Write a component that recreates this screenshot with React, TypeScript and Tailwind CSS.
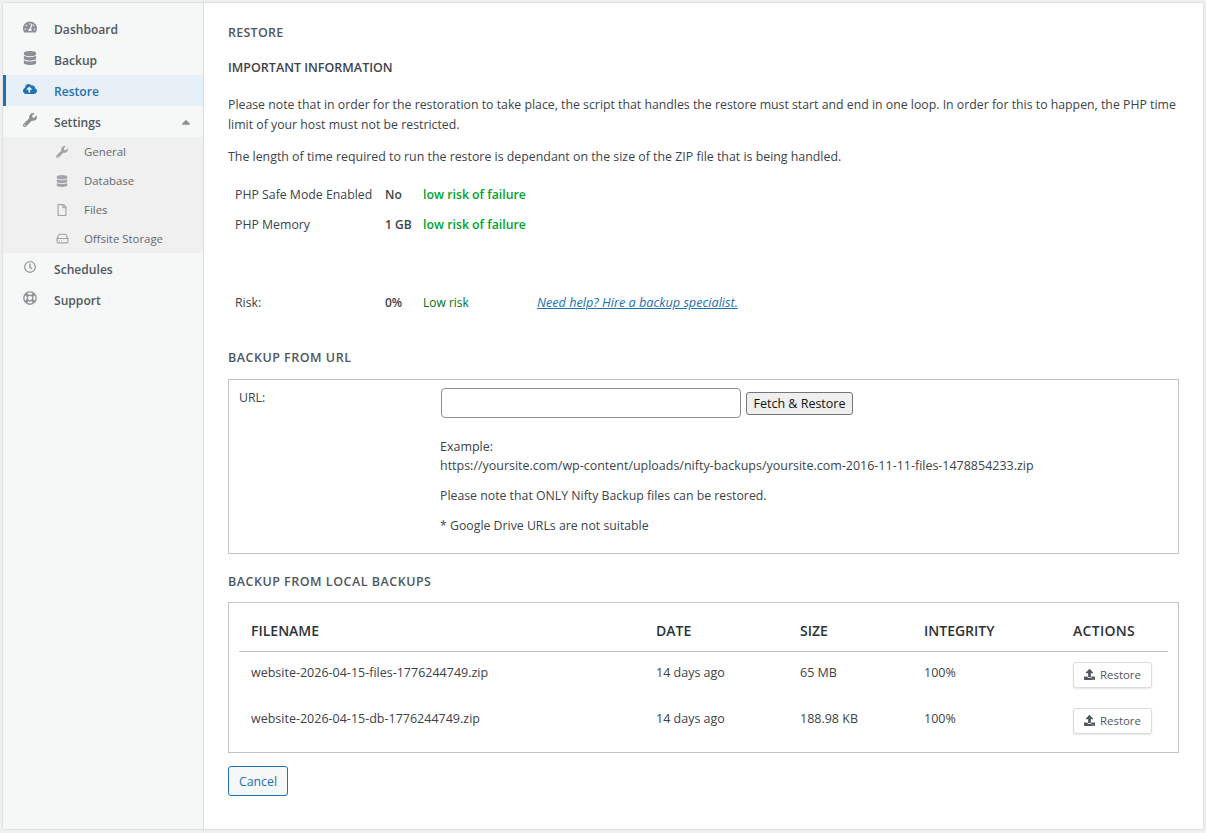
import React from 'react';
import {
  FaTachometerAlt,
  FaDatabase,
  FaCloudUploadAlt,
  FaWrench,
  FaRegFile,
  FaRegClock,
  FaRegLifeRing,
  FaUpload,
  FaCaretUp,
} from 'react-icons/fa';
import { HardDrive } from 'lucide-react';

const NavItem = ({ icon, label, active, caret }: { icon: React.ReactNode; label: string; active?: boolean; caret?: boolean }) => (
  <div
    className={`h-[31px] flex items-center text-[12.1px] font-semibold border-l-[3px] ${
      active ? 'bg-[#e8f0f7] border-[#2271b1] text-[#2271b1]' : 'border-transparent text-[#50575e]'
    }`}
  >
    <span className={`w-[48px] pl-[17px] pb-[3px] text-[14px] ${active ? 'text-[#2271b1]' : 'text-[#8c8f94]'}`}>{icon}</span>
    <span className="flex-1 pt-[4px]">{label}</span>
    {caret && <FaCaretUp className="mr-[10px] text-[14px] text-[#8c8f94]" />}
  </div>
);

const SubItem = ({ icon, label }: { icon: React.ReactNode; label: string }) => (
  <div className="h-[29px] flex items-center text-[11.4px] text-[#646970]">
    <span className="w-[81px] pl-[53px] text-[12px] text-[#a0a3a8]">{icon}</span>
    <span>{label}</span>
  </div>
);

const CheckRow = ({ label, value, risk }: { label: string; value: string; risk: string }) => (
  <div className="h-[30px] flex items-center">
    <span className="w-[157px] pl-[7px]">{label}</span>
    <span className="w-[38px] font-semibold text-[12px]">{value}</span>
    <span className="font-semibold text-[#00a32a]">{risk}</span>
  </div>
);

const files = [
  { name: 'website-2026-04-15-files-1776244749.zip', size: '65 MB' },
  { name: 'website-2026-04-15-db-1776244749.zip', size: '188.98 KB' },
];

export default function App() {
  return (
    <div className="min-h-[833px] bg-[#f0f0f1] p-[3px] pb-[4px] text-[12.3px] text-[#3c434a] font-['Open_Sans','Liberation_Sans',sans-serif]">
      <div className="h-[826px] flex bg-white shadow-[0_0_2px_rgba(0,0,0,0.2)]">
        <aside className="w-[201px] shrink-0 bg-[#f6f7f7] border-r border-[#dcdcde] pt-[10px]">
          <NavItem icon={<FaTachometerAlt />} label="Dashboard" />
          <NavItem icon={<FaDatabase />} label="Backup" />
          <NavItem icon={<FaCloudUploadAlt />} label="Restore" active />
          <NavItem icon={<FaWrench />} label="Settings" caret />
          <div className="bg-[#f0f0f1]">
            <SubItem icon={<FaWrench />} label="General" />
            <SubItem icon={<FaDatabase />} label="Database" />
            <SubItem icon={<FaRegFile />} label="Files" />
            <SubItem icon={<HardDrive size={13} />} label="Offsite Storage" />
          </div>
          <NavItem icon={<FaRegClock className="ml-[1px] text-[12px]" />} label="Schedules" />
          <NavItem icon={<FaRegLifeRing />} label="Support" />
        </aside>

        <main className="flex-1 pl-[24px] pr-[24px]">
          <h2 className="mt-[21px] h-[17px] leading-[17px] text-[12.5px] font-semibold text-[#50575e] tracking-[0.02em]">RESTORE</h2>
          <h3 className="mt-[18px] h-[17px] leading-[17px] text-[12.5px] font-semibold">IMPORTANT INFORMATION</h3>
          <p className="mt-[19px] leading-[20px]">
            Please note that in order for the restoration to take place, the script that handles the restore must start and end in one loop. In order for this to happen, the PHP time limit of your host must not be restricted.
          </p>
          <p className="mt-[12px] leading-[20px] text-[12.36px]">The length of time required to run the restore is dependant on the size of the ZIP file that is being handled.</p>

          <div className="mt-[13px]">
            <CheckRow label="PHP Safe Mode Enabled" value="No" risk="low risk of failure" />
            <CheckRow label="PHP Memory" value="1 GB" risk="low risk of failure" />
          </div>
          <div className="mt-[48px] h-[30px] flex items-center">
            <span className="w-[157px] pl-[7px]">Risk:</span>
            <span className="w-[38px] font-semibold text-[12px]">0%</span>
            <span className="w-[114px] text-[12px] text-[#007017]">Low risk</span>
            <a className="italic underline text-[12.7px] text-[#2271b1]">Need help? Hire a backup specialist.</a>
          </div>

          <h3 className="mt-[31px] h-[17px] leading-[17px] text-[12.5px] font-semibold tracking-[0.04em] text-[#50575e]">BACKUP FROM URL</h3>
          <section className="mt-[13px] h-[175px] border border-[#c3c4c7] flex">
            <div className="w-[211px] pl-[10px] pt-[9px]">URL:</div>
            <div className="pt-[8px]">
              <div className="flex items-center gap-[5px] ml-[1px]">
                <input className="w-[300px] h-[30px] bg-white border border-[#8c8f94] rounded-[4px]" />
                <button className="w-[107px] h-[23px] pt-[2px] bg-[#efefef] border border-[#767676] rounded-[3px] text-[12.5px] text-[#111]">Fetch &amp; Restore</button>
              </div>
              <p className="mt-[19px] leading-[19px] text-[12.47px]">
                Example:
                <br />
                https://yoursite.com/wp-content/uploads/nifty-backups/yoursite.com-2016-11-11-files-1478854233.zip
              </p>
              <p className="mt-[11px] leading-[19px]">Please note that ONLY Nifty Backup files can be restored.</p>
              <p className="mt-[11px] leading-[19px]">* Google Drive URLs are not suitable</p>
            </div>
          </section>

          <h3 className="mt-[19px] h-[17px] leading-[17px] text-[12.5px] font-semibold tracking-[0.04em] text-[#50575e]">BACKUP FROM LOCAL BACKUPS</h3>
          <section className="mt-[12px] h-[151px] border border-[#c3c4c7] px-[10px] pt-[10px] text-[12.5px]">
            <div className="h-[39px] flex items-center border-b border-[#c3c4c7] pl-[12px] pb-[4px] text-[14px] font-semibold text-[#2c3338]">
              <span className="w-[405px]">FILENAME</span>
              <span className="w-[144px]">DATE</span>
              <span className="w-[124px]">SIZE</span>
              <span className="w-[149px]">INTEGRITY</span>
              <span className="tracking-[0.02em]">ACTIONS</span>
            </div>
            <div className="-mt-[2px]">
              {files.map((f) => (
                <div key={f.name} className="h-[46px] flex items-center pl-[12px]">
                  <span className="w-[405px]">{f.name}</span>
                  <span className="w-[144px]">14 days ago</span>
                  <span className="w-[124px]">{f.size}</span>
                  <span className="w-[149px]">100%</span>
                  <button className="mt-[3px] w-[79px] h-[26px] flex items-center justify-center gap-[5px] bg-white border border-[#dcdcde] rounded-[3px] shadow-[0_1px_2px_rgba(0,0,0,0.1)] text-[11.4px] text-[#50575e]">
                    <FaUpload className="text-[11px]" /> Restore
                  </button>
                </div>
              ))}
            </div>
          </section>

          <button className="mt-[13px] w-[60px] h-[30px] pt-[2px] bg-[#f6f7f7] border border-[#2271b1] rounded-[3px] text-[#2271b1]">Cancel</button>
        </main>
      </div>
    </div>
  );
}
